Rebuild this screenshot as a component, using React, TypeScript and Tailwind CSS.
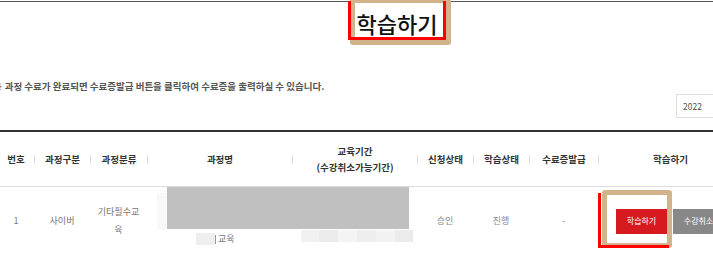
import React from "react";

const cols = [
  { w: 36, head: ["번호"] },
  { w: 56, head: ["과정구분"] },
  { w: 57, head: ["과정분류"] },
  { w: 145, head: ["과정명"] },
  { w: 125, head: ["교육기간", "(수강취소가능기간)"] },
  { w: 56, head: ["신청상태"] },
  { w: 56, head: ["학습상태"] },
  { w: 69, head: ["수료증발급"] },
  { w: 144, head: ["학습하기"] },
];

export default function App() {
  return (
    <div className="relative w-[713px] h-[254px] overflow-hidden bg-white font-['Noto_Sans_CJK_KR','Noto_Sans',sans-serif]">
      <div className="mt-px h-px w-full bg-[#555]" />
      <div className="relative -ml-[2px] w-[800px]">
        {/* title */}
        <div className="flex h-[40px] w-[798px] items-center justify-center">
          <h1 className="text-[22px] leading-[22px] font-medium text-[#111] mt-[2px]">학습하기</h1>
        </div>
        {/* notice */}
        <div className="mt-[38px] -ml-[5px] text-[9.5px] leading-[12px] font-bold text-[#555] whitespace-nowrap">
          ※ 과정 수료가 완료되면 수료증발급 버튼을 클릭하여 수료증을 출력하실 수 있습니다.
        </div>
        {/* year select */}
        <div className="mt-[2px] flex w-[742px] justify-end">
          <div className="flex h-[24px] w-[64px] items-center border border-[#ddd] pl-[6px] text-[8.5px] text-[#555]">
            2022
          </div>
        </div>
        {/* table */}
        <div className="mt-[12px] w-[800px] border-t-2 border-[#333]">
          <div className="flex h-[55px] items-center border-b border-[#ddd]">
            {cols.map((c, i) => (
              <div key={i} className="flex items-center" style={{ width: c.w }}>
                {i > 0 && <span className="h-[9px] w-px shrink-0 bg-[#ddd]" />}
                <div className="flex flex-1 flex-col items-center text-[9.5px] leading-[16px] font-bold text-[#333] whitespace-nowrap">
                  {c.head.map((t) => (
                    <span key={t}>{t}</span>
                  ))}
                </div>
              </div>
            ))}
          </div>
          <div className="relative flex h-[68px] items-center text-[9px] text-[#777]">
            <div className="flex justify-center" style={{ width: 36 }}>1</div>
            <div className="flex justify-center" style={{ width: 56 }}>사이버</div>
            <div className="flex flex-col items-center leading-[18px]" style={{ width: 57 }}>
              <span>기타필수교</span>
              <span>육</span>
            </div>
            <div className="flex shrink-0 items-end self-stretch pb-[10px]" style={{ width: 145 }}>
              <div className="w-[49px] shrink-0" />
              <div className="flex items-center">
                <div className="h-[12px] w-[19px] shrink-0 bg-[#eeeeee]" />
                <div className="h-[9px] w-px shrink-0 bg-[#999]" />
                <span className="ml-[2px] leading-[12px]">교육</span>
              </div>
            </div>
            <div className="flex shrink-0 flex-col items-center self-stretch justify-end pb-[13px]" style={{ width: 125 }}>
              <div className="ml-[5px] flex h-[12px] w-[113px]">
                <span className="flex-1 bg-[#f1f1f1]" />
                <span className="flex-1 bg-[#ececec]" />
                <span className="flex-1 bg-[#f4f4f4]" />
                <span className="flex-1 bg-[#eeeeee]" />
                <span className="flex-1 bg-[#f2f2f2]" />
                <span className="flex-1 bg-[#ebebeb]" />
              </div>
            </div>
            <div className="flex justify-center text-[#8a8a8a]" style={{ width: 56 }}>승인</div>
            <div className="flex justify-center text-[#8a8a8a]" style={{ width: 56 }}>진행</div>
            <div className="flex justify-center" style={{ width: 69 }}>-</div>
            <div className="flex justify-center gap-[6px]" style={{ width: 144 }}>
              <button className="h-[25px] w-[51px] bg-[#d71920] text-[8px] text-white">학습하기</button>
              <button className="h-[25px] w-[51px] bg-[#888888] text-[8px] text-white">수강취소</button>
            </div>
          </div>
        </div>
      </div>

      {/* redaction overlay */}
      <div className="absolute left-[157px] top-[193px] h-[37px] w-[10px] bg-[#f8f8f8]" />
      <div className="absolute left-[167px] top-[187px] h-[42px] w-[242px] bg-[#c0c0c0]" />

      {/* annotation boxes: title */}
      <div className="absolute left-[350px] top-[-2px] h-[47px] w-[101px] rounded-[3px] border-[5px] border-[#d2b48c]" />
      <div className="absolute left-[348px] top-[1px] h-[39px] w-[98px] border-[3px] border-[#ff0000] border-t-0" />
      {/* annotation boxes: button */}
      <div className="absolute left-[602px] top-[190px] h-[58px] w-[70px] rounded-[3px] border-[5px] border-[#d2b48c]" />
      <div className="absolute left-[598px] top-[193px] h-[55px] w-[71px] border-[3px] border-[#ff0000] border-t-0 border-r-0" />
    </div>
  );
}
